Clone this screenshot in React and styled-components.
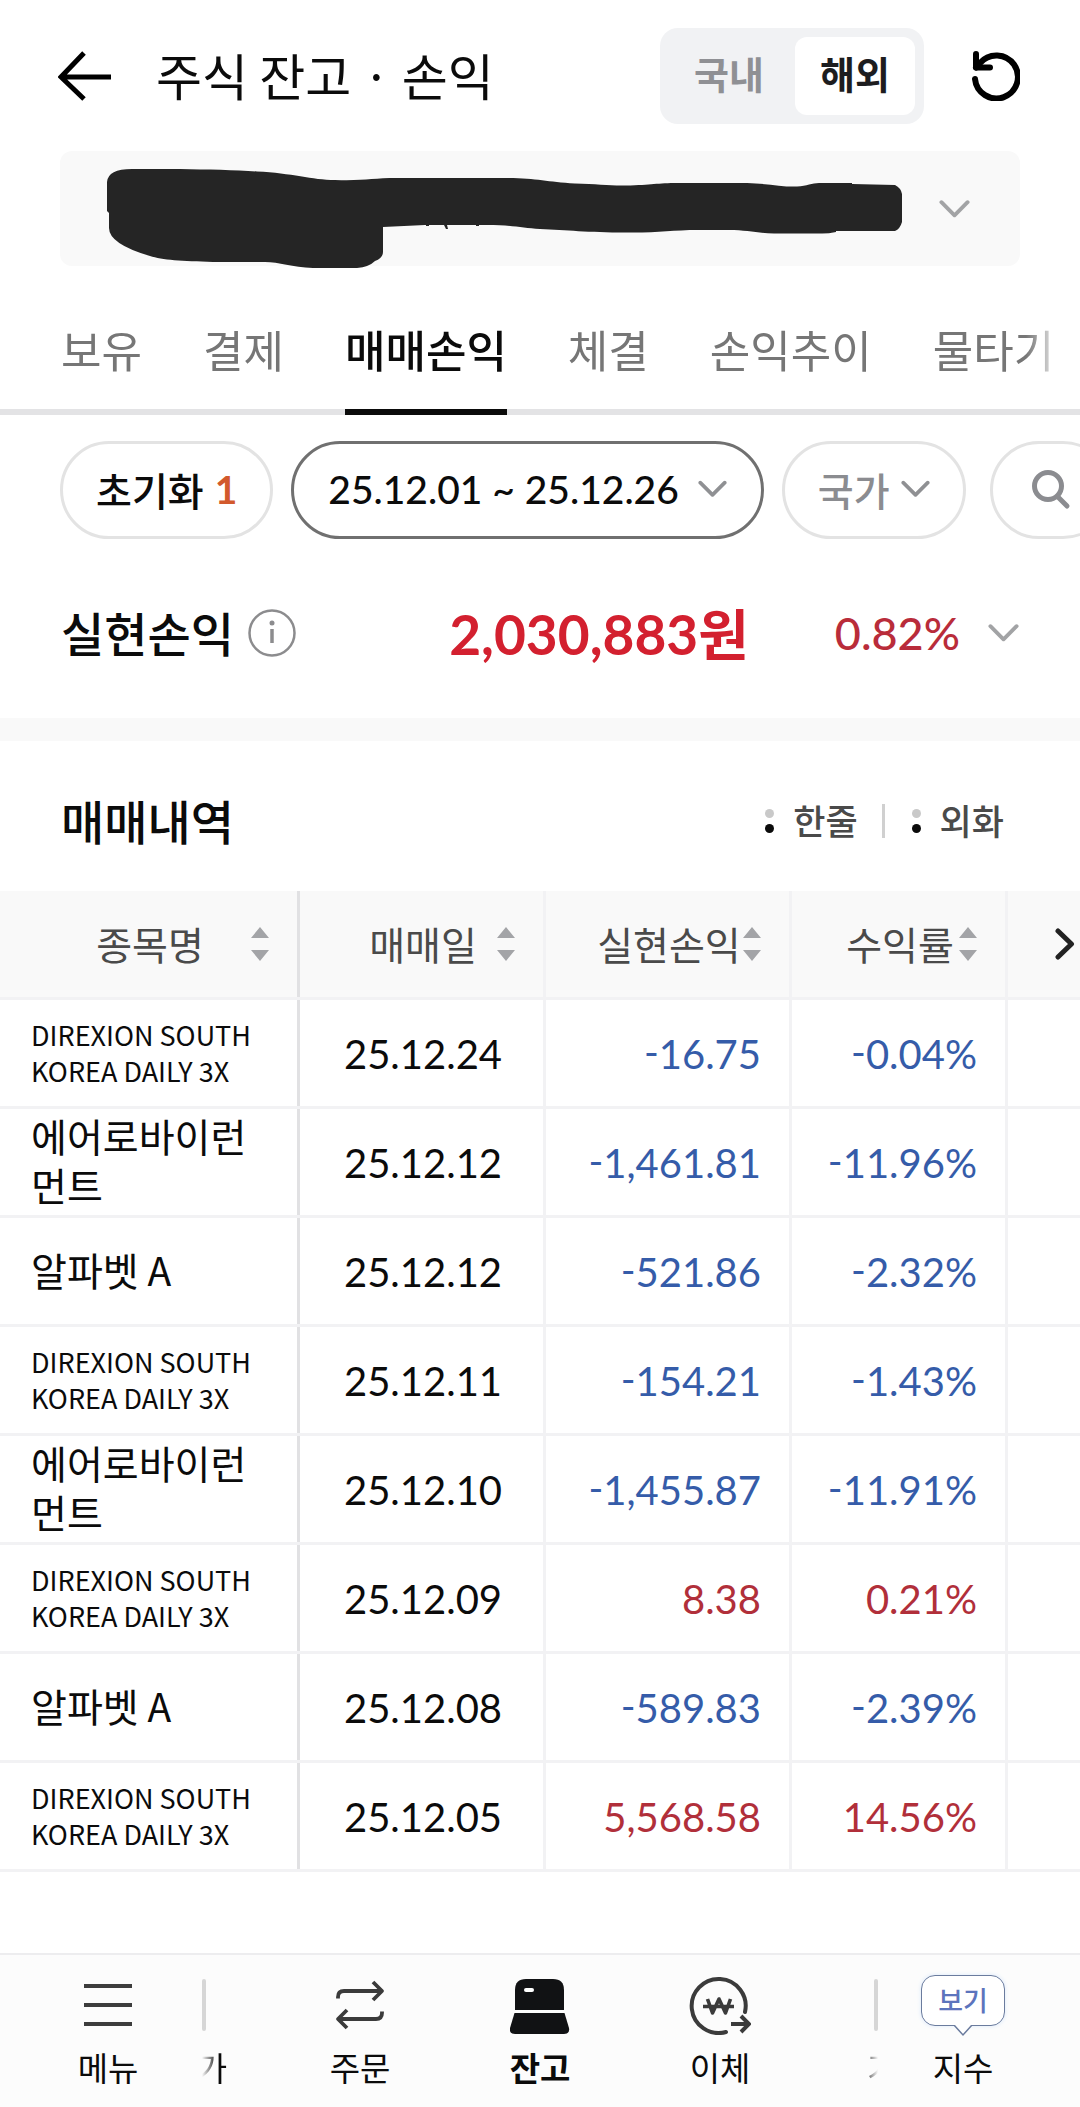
import React, { useState } from "react"
import styled, { createGlobalStyle, css } from "styled-components"

const trades = [
  { name: "DIREXION SOUTH KOREA DAILY 3X", date: "25.12.24", profit: "-16.75", rate: "-0.04%", small: true },
  { name: "에어로바이런먼트", date: "25.12.12", profit: "-1,461.81", rate: "-11.96%" },
  { name: "알파벳 A", date: "25.12.12", profit: "-521.86", rate: "-2.32%" },
  { name: "DIREXION SOUTH KOREA DAILY 3X", date: "25.12.11", profit: "-154.21", rate: "-1.43%", small: true },
  { name: "에어로바이런먼트", date: "25.12.10", profit: "-1,455.87", rate: "-11.91%" },
  { name: "DIREXION SOUTH KOREA DAILY 3X", date: "25.12.09", profit: "8.38", rate: "0.21%", small: true },
  { name: "알파벳 A", date: "25.12.08", profit: "-589.83", rate: "-2.39%" },
  { name: "DIREXION SOUTH KOREA DAILY 3X", date: "25.12.05", profit: "5,568.58", rate: "14.56%", small: true },
]

const tabs = ["보유", "결제", "매매손익", "체결", "손익추이", "물타기"]
const columns = ["종목명", "매매일", "실현손익", "수익률"]

const BackIcon = () => (
  <svg width="54" height="50" viewBox="0 0 54 50" fill="none" stroke="#000" strokeWidth="5">
    <path d="M53 26H3M26 2L3 26l23 22" />
  </svg>
)

const ReloadIcon = () => (
  <svg width="48" height="50" viewBox="0 0 48 50" fill="none" stroke="#000" strokeWidth="6" strokeLinecap="round" strokeLinejoin="round">
    <path d="M3 28A21.500 21.500 0 1 0 8 12L4 16.500" />
    <path d="M4 3v13.500h14" />
  </svg>
)

const Chevron = ({ color = "#a2a3a5", width = 31 }) => (
  <svg width={width} height="20" viewBox="0 0 32 20" fill="none" stroke={color} strokeWidth="4" strokeLinecap="round" strokeLinejoin="round">
    <path d="M2.500 3L16 16.500L29.500 3" />
  </svg>
)

const SearchIcon = () => (
  <svg width="40" height="40" viewBox="0 0 40 40" fill="none" stroke="#8b8c90" strokeWidth="5" strokeLinecap="round">
    <circle cx="17" cy="16" r="13.500" />
    <path d="M27 27l9 9" />
  </svg>
)

const InfoIcon = () => (
  <svg width="48" height="48" viewBox="0 0 48 48" fill="none">
    <circle cx="24" cy="24" r="22.500" stroke="#8c8c8e" strokeWidth="2.500" />
    <circle cx="24" cy="14" r="2.500" fill="#8c8c8e" />
    <path d="M24 20v14" stroke="#8c8c8e" strokeWidth="3.500" />
  </svg>
)

const SortIcon = () => (
  <svg width="18" height="36" viewBox="0 0 18 36" fill="#a3a4a7">
    <path d="M9 1l9 11H0zM9 35l9-11H0z" />
  </svg>
)

// the account number is scribbled over with a marker
const Scribble = () => (
  <svg width="796" height="102" viewBox="0 0 796 102" fill="#252525">
    <path d="M0 14Q1 1 25 1H73C100 1.500 130 2 150 3.500C185 5 205 12 228 12C258 13 265 10 290 10H400C430 10 440 14 468 15.500C490 16 505 18 519 17.500C545 17 550 15 571 15H640C660 15.500 675 19 690 18.500C700 18 705 15 712 15H745V16L788 17Q794 20 795 26V54Q793 61 788 63H729V64Q720 66 712 65.500H667C650 65 640 62 622 62H591C565 62 550 65 519 64.500C480 64.500 460 62 433 61C415 60 405 57 380 57H318L276 59V84Q276 90 268 93Q262 99 250 100H206C185 99 172 94 158 94H106C75 93 55 92 43 88Q2 76 2 60V45L0 43Z" />
    <path d="M319 57h3v1h-3zM337 57h3l1 4h-2zM369 57h3v1h-3z" />
  </svg>
)

const MenuIcon = () => (
  <svg width="48" height="44" viewBox="0 0 48 44" stroke="#3d3d3d" strokeWidth="4">
    <path d="M0 3h48M0 22h48M0 41h48" />
  </svg>
)

const OrderIcon = () => (
  <svg width="50" height="50" viewBox="0 0 50 50" fill="none" stroke="#3b3b3b" strokeWidth="3.800" strokeLinejoin="round">
    <path d="M3 18.500V17Q3 11 9 11H47M38 2l9 9-9 9" />
    <path d="M47 31.500V33Q47 39 41 39H3M12 30l-9 9 9 9" />
  </svg>
)

const BalanceIcon = () => (
  <svg width="60" height="60" viewBox="0 -4 60 60" fill="#111214">
    <path d="M5 31V11Q5 0 16 0H43Q54 0 54 11V31Z" />
    <path d="M4.500 34H54.500L59 49Q60 55 54 55H5Q-1 55 0 49Z" />
    <rect x="14" y="9" width="10" height="4" rx="2" fill="#fff" />
  </svg>
)

const TransferIcon = () => (
  <svg width="62" height="60" viewBox="0 0 62 60" fill="none" stroke="#3b3b3b" strokeWidth="4">
    <path d="M56 37A27 27 0 1 0 37 57" strokeLinecap="round" />
    <path d="M18.500 24l5 14 6.500-14 6.500 14 5-14M14 31.500h31" strokeWidth="3.600" strokeLinejoin="round" />
    <path d="M42 49h17M52 41l8 8-8 8" />
  </svg>
)

const NavDivider = () => (
  <svg width="4" height="52" viewBox="0 0 4 52">
    <rect width="4" height="52" rx="2" fill="#d6d6d6" />
  </svg>
)

const Amount = ({ value }) => {
  const down = value.startsWith("-")

  return (
    <AmountCell $down={down}>
      {down && <Sign>-</Sign>}
      {value.replace("-", "")}
    </AmountCell>
  )
}

const App = () => {
  const [market, setMarket] = useState("해외")

  return (
    <Page>
      <GlobalStyle />
      <Header>
        <IconButton aria-label="뒤로">
          <BackIcon />
        </IconButton>
        <h1>주식 잔고 · 손익</h1>
        <Toggle>
          {["국내", "해외"].map(item => (
            <ToggleButton key={item} $active={item === market} onClick={() => setMarket(item)}>
              {item}
            </ToggleButton>
          ))}
        </Toggle>
        <IconButton aria-label="새로고침">
          <ReloadIcon />
        </IconButton>
      </Header>

      <Account aria-label="계좌 선택">
        <Scribble />
        <Chevron />
      </Account>

      <Tabs>
        <div className="list">
          {tabs.map(tab => (
            <Tab key={tab} href="#" $active={tab === "매매손익"}>
              {tab}
            </Tab>
          ))}
        </div>
      </Tabs>

      <Filters>
        <Chip $strong>
          초기화 <Count>1</Count>
        </Chip>
        <DateChip $strong>
          25.12.01 ~ 25.12.26 <Chevron color="#8f9093" width={29} />
        </DateChip>
        <Chip>
          국가 <Chevron color="#8f9093" width={29} />
        </Chip>
        <SearchChip aria-label="검색">
          <SearchIcon />
        </SearchChip>
      </Filters>

      <Summary>
        <h2>실현손익</h2>
        <IconButton aria-label="도움말">
          <InfoIcon />
        </IconButton>
        <strong>2,030,883원</strong>
        <span className="rate">0.82%</span>
        <IconButton aria-label="펼치기">
          <Chevron />
        </IconButton>
      </Summary>

      <SectionHead>
        <h2>매매내역</h2>
        <Option>
          <span className="dots" />
          <span className="text">한줄</span>
        </Option>
        <Separator />
        <Option>
          <span className="dots" />
          <span className="text">외화</span>
        </Option>
      </SectionHead>

      <Table>
        <colgroup>
          <col width="300" />
          <col width="246" />
          <col width="246" />
          <col width="216" />
          <col />
        </colgroup>
        <thead>
          <tr>
            {columns.map(column => (
              <th key={column}>
                <SortButton>
                  <span>{column}</span>
                  <SortIcon />
                </SortButton>
              </th>
            ))}
            <th>
              <NextButton aria-label="다음">
                <svg width="20" height="32" viewBox="0 0 20 32" fill="none" stroke="#222" strokeWidth="5" strokeLinecap="round" strokeLinejoin="round">
                  <path d="M3 3l13.500 13L3 29" />
                </svg>
              </NextButton>
            </th>
          </tr>
        </thead>
        <tbody>
          {trades.map(({ name, date, profit, rate, small }) => (
            <tr key={date + name}>
              <NameCell $small={small}>{name}</NameCell>
              <DateCell>{date}</DateCell>
              <Amount value={profit} />
              <Amount value={rate} />
              <td />
            </tr>
          ))}
        </tbody>
      </Table>

      <BottomNav>
        <SideItem href="#">
          <span className="icon">
            <MenuIcon />
          </span>
          <span>메뉴</span>
        </SideItem>
        <Scroller>
          <EdgeItem href="#">
            <span className="icon">
              <NavDivider />
            </span>
            <span className="label">가</span>
          </EdgeItem>
          <NavItem href="#">
            <span className="icon">
              <OrderIcon />
            </span>
            <span>주문</span>
          </NavItem>
          <NavItem href="#" $active>
            <span className="icon">
              <BalanceIcon />
            </span>
            <span>잔고</span>
          </NavItem>
          <NavItem href="#">
            <span className="icon">
              <TransferIcon />
            </span>
            <span>이체</span>
          </NavItem>
          <EdgeItem href="#" $end>
            <span className="icon">
              <NavDivider />
            </span>
            <span className="label">기</span>
          </EdgeItem>
        </Scroller>
        <SideItem href="#" $end>
          <span className="icon">
            <Bubble>
              보기
              <svg width="20" height="12" viewBox="0 0 20 12" fill="#fff" stroke="#6b7c9e" strokeWidth="1.500">
                <path d="M1 0l9 10 9-10" />
              </svg>
            </Bubble>
          </span>
          <span>지수</span>
        </SideItem>
      </BottomNav>
    </Page>
  )
}

const GlobalStyle = createGlobalStyle`
  * {
    box-sizing: border-box;
  }
  body {
    margin: 0;
    background: #fff;
    color: #0b0b0b;
    font-family: "Noto Sans CJK KR", sans-serif;
    overflow-x: hidden;
  }
  h1, h2 {
    margin: 0;
    padding-bottom: 4px;
    font-weight: 500;
  }
  a {
    color: inherit;
    text-decoration: none;
  }
  button {
    padding: 0;
    border: 0;
    background: none;
    color: inherit;
    font: inherit;
  }
  svg {
    display: block;
    flex: none;
  }
`

const numeric = css`
  font-family: Lato, "Noto Sans CJK KR", sans-serif;
`

const Page = styled.div`
  display: flex;
  flex-direction: column;
  min-height: 100vh;
  overflow: hidden;
`

const IconButton = styled.button`
  flex: none;
`

const Header = styled.header`
  display: flex;
  align-items: center;
  padding: 28px 60px 27px 58px;

  h1 {
    margin-left: 44px;
    font-size: 50px;
    line-height: 60px;
    font-weight: 400;
    white-space: nowrap;
  }
`

const Toggle = styled.div`
  display: flex;
  gap: 6px;
  margin: 0 48px 0 auto;
  padding: 9px;
  border-radius: 18px;
  background: #f1f2f4;
`

const ToggleButton = styled.button`
  width: 120px;
  height: 78px;
  padding-bottom: 8px;
  border-radius: 12px;
  background: ${({ $active }) => ($active ? "#fff" : "transparent")};
  color: ${({ $active }) => ($active ? "#1d1d1f" : "#8f9094")};
  font-size: 38px;
  font-weight: 700;
`

const Account = styled.button`
  display: flex;
  align-items: flex-start;
  justify-content: space-between;
  height: 115px;
  margin: 0 60px;
  padding: 17px 50px 0 47px;
  border-radius: 12px;
  background: #f9f9f9;

  svg:last-child {
    margin-top: 31px;
  }
`

const Tabs = styled.nav`
  height: 149px;
  border-bottom: 6px solid #e3e3e5;

  .list {
    display: flex;
    gap: 61px;
    height: 149px;
    padding: 50px 0 0 61px;
    overflow: hidden;
    mask-image: linear-gradient(to left, transparent 18px, #000 54px);
  }
`

const Tab = styled.a`
  flex: none;
  border-bottom: 6px solid ${({ $active }) => ($active ? "#0b0b0b" : "transparent")};
  color: ${({ $active }) => ($active ? "#0b0b0b" : "#767676")};
  font-size: 44px;
  line-height: 66px;
  font-weight: ${({ $active }) => ($active ? 500 : 400)};
`

const Filters = styled.div`
  display: flex;
  gap: 18px;
  padding: 26px 0 0 60px;
`

const Chip = styled.button`
  ${numeric}
  display: flex;
  flex: none;
  align-items: center;
  gap: 11px;
  height: 98px;
  padding: 0 33px 2px;
  border: 3px solid #e3e3e3;
  border-radius: 49px;
  color: ${({ $strong }) => ($strong ? "#0b0b0b" : "#8b8c90")};
  font-size: 39px;
  font-weight: 500;
  white-space: nowrap;
`

const DateChip = styled(Chip)`
  gap: 19px;
  padding: 0 34px 2px;
  border-color: #707070;
`

const SearchChip = styled(Chip)`
  margin-left: 6px;
  padding: 0 38px;
`

const Count = styled.b`
  color: #d2592c;
`

const Summary = styled.section`
  display: flex;
  align-items: center;
  height: 179px;
  padding: 9px 61px 0;

  h2 {
    margin-right: 14px;
    font-size: 47px;
  }

  strong {
    ${numeric}
    margin-left: auto;
    padding-bottom: 4px;
    color: #d3202f;
    font-size: 55px;
  }

  .rate {
    ${numeric}
    margin: 0 28px 0 86px;
    color: #b92c3a;
    font-size: 45px;
    font-weight: 500;
  }
`

const SectionHead = styled.section`
  display: flex;
  align-items: center;
  height: 173px;
  padding: 10px 76px 0 61px;
  border-top: 23px solid #f9f9f9;

  h2 {
    margin-right: auto;
    font-size: 47px;
  }
`

const Option = styled.button`
  display: flex;
  align-items: center;
  gap: 19px;
  color: #4a4a4a;
  font-size: 35px;
  font-weight: 500;

  .text {
    padding-bottom: 4px;
  }

  .dots {
    display: grid;
    gap: 6px;
  }

  .dots::before,
  .dots::after {
    content: "";
    width: 9px;
    height: 9px;
    border-radius: 50%;
    background: #c9c9c9;
  }

  .dots::after {
    background: #0b0b0b;
  }
`

const Separator = styled.span`
  width: 3px;
  height: 34px;
  margin: 0 27px 0 24px;
  background: #d0d0d0;
`

const Table = styled.table`
  width: 100%;
  table-layout: fixed;
  border-spacing: 0;

  th,
  td {
    height: 109px;
    padding: 0 31px;
    border-bottom: 3px solid #f2f2f4;
    box-shadow: inset -3px 0 #f2f2f4;
  }

  th {
    background: #f9f9f9;
    color: #4a4a4a;
    font-size: 39px;
    font-weight: 400;
  }

  th:first-child,
  td:first-child {
    box-shadow: inset -3px 0 #e1e1e3;
  }

  th:last-child,
  td:last-child {
    padding: 0;
    box-shadow: none;
  }
`

const SortButton = styled.button`
  display: grid;
  grid-template-columns: 1fr auto 1fr;
  align-items: center;
  width: 100%;

  span {
    grid-column: 2;
    padding-bottom: 2px;
    white-space: nowrap;
  }

  svg {
    justify-self: end;
  }
`

const NextButton = styled.button`
  display: flex;
  justify-content: flex-end;
  width: 100%;
  padding-right: 5px;
`

const NameCell = styled.td`
  &&& {
    padding-bottom: ${({ $small }) => ($small ? 0 : 4)}px;
  }
  font-size: ${({ $small }) => ($small ? 27 : 39)}px;
  line-height: ${({ $small }) => ($small ? 36 : 49)}px;
  word-break: break-all;
`

const NumberCell = styled.td`
  ${numeric}
  &&& {
    padding-top: 2px;
  }
  font-size: 40px;
`

const DateCell = styled(NumberCell)`
  text-align: center;
`

const AmountCell = styled(NumberCell)`
  color: ${({ $down }) => ($down ? "#355ca9" : "#b12f3a")};
  text-align: right;
`

// raises the minus to the middle of the digits
const Sign = styled.span`
  vertical-align: 2px;
  line-height: 1;
`

const BottomNav = styled.nav`
  display: flex;
  height: 154px;
  margin-top: auto;
  padding-top: 20px;
  border-top: 2px solid #ededef;
  background: #fcfcfc;
`

const NavItem = styled.a`
  display: flex;
  flex: 1;
  flex-direction: column;
  align-items: center;
  gap: 10px;
  min-width: 0;
  color: #0b0b0b;
  font-size: 33px;
  line-height: 44px;
  font-weight: ${({ $active }) => ($active ? 700 : 400)};

  .icon {
    display: flex;
    align-items: center;
    height: 60px;
  }
`

const SideItem = styled(NavItem)`
  flex: 0 0 201px;
  padding-left: ${({ $end }) => ($end ? 0 : 15)}px;
  padding-right: ${({ $end }) => ($end ? 33 : 0)}px;
`

const Scroller = styled.div`
  display: flex;
  flex: 1;
  overflow: hidden;
`

// items cut off at either end of the scrolling part
const EdgeItem = styled(NavItem)`
  flex: 0 0 69px;
  align-items: ${({ $end }) => ($end ? "flex-end" : "flex-start")};
  padding: 0 1px;

  .label {
    display: flex;
    justify-content: ${({ $end }) => ($end ? "flex-start" : "flex-end")};
    width: 100%;
    padding: ${({ $end }) => ($end ? "0 0 0 56px" : "0 42px 0 0")};
    overflow: hidden;
    mask-image: linear-gradient(
      to ${({ $end }) => ($end ? "left" : "right")},
      transparent,
      #000 16px
    );
  }
`

const Bubble = styled.span`
  position: relative;
  width: 84px;
  height: 51px;
  margin-bottom: 9px;
  border: 1px solid #6b7c9e;
  border-radius: 14px;
  background: #fff;
  box-shadow: 0 0 4px #dbe9fb;
  color: #5c74bd;
  font-size: 27px;
  line-height: 47px;
  font-weight: 500;
  text-align: center;

  svg {
    position: absolute;
    top: 49px;
    left: 31px;
  }
`

export default App
